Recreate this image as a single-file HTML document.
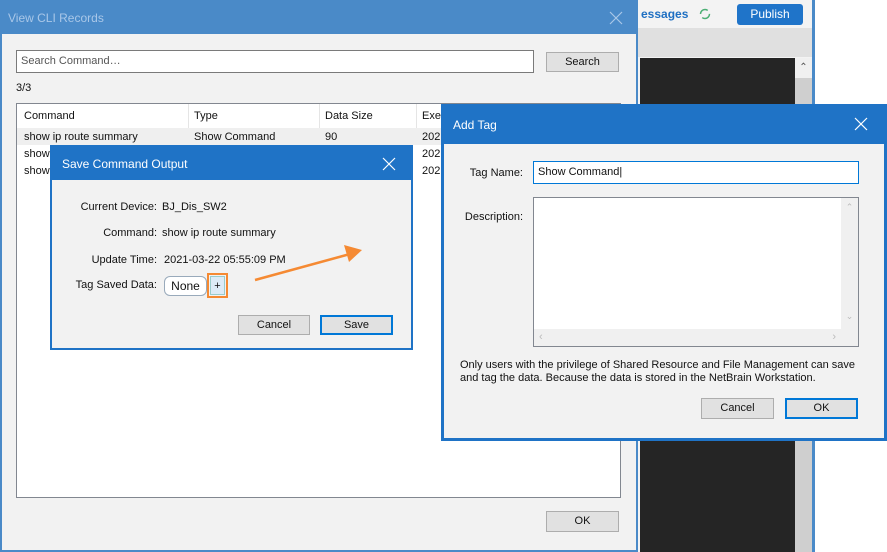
<!DOCTYPE html>
<html><head><style>
*{box-sizing:border-box;margin:0;padding:0}
body{width:887px;height:552px;position:relative;overflow:hidden;background:#fff;font-family:"Liberation Sans",sans-serif;font-size:11px;color:#111}
.a{position:absolute}
.btn{position:absolute;background:#e1e1e1;border:1px solid #adadad;text-align:center;font-size:11px;line-height:19px}
.btnp{border:2px solid #0078d7;line-height:17px}
.x{position:absolute;width:14px;height:14px}
</style></head><body>
<div class="a" style="left:637px;top:0;width:178px;height:552px;background:#f3f3f3"></div>
<div class="a" style="left:641px;top:7px;font-size:12px;color:#1e6fc2;font-weight:bold">essages</div>
<svg class="a" style="left:698px;top:7px" width="14" height="14"><circle cx="7" cy="7" r="4.5" fill="none" stroke="#4caf74" stroke-width="1.5" stroke-dasharray="10 4"/></svg>
<div class="a" style="left:737px;top:4px;width:66px;height:21px;background:#1f74c9;border-radius:3px;color:#fff;font-size:12px;text-align:center;line-height:21px">Publish</div>
<div class="a" style="left:637px;top:28px;width:175px;height:29px;background:#e0e0e0"></div>
<div class="a" style="left:640px;top:58px;width:155px;height:494px;background:#252525"></div>
<div class="a" style="left:795px;top:58px;width:17px;height:494px;background:#cfcfcf"></div>
<div class="a" style="left:795px;top:58px;width:17px;height:20px;background:#f0f0f0;text-align:center;font-size:10px;color:#555;line-height:20px">&#8963;</div>
<div class="a" style="left:812px;top:0;width:3px;height:552px;background:#4a8ac8"></div>

<div class="a" style="left:0;top:0;width:638px;height:552px;background:#f2f2f2;border:2px solid #4a8ac8;border-top:none"></div>
<div class="a" style="left:0;top:0;width:638px;height:34px;background:#4a8ac8"></div>
<div class="a" style="left:8px;top:11px;font-size:12px;color:#a9c7e8">View CLI Records</div>
<svg class="x" style="left:609px;top:11px"><path d="M1 1L13 13M13 1L1 13" stroke="#a9c7e8" stroke-width="1.2"/></svg>
<div class="a" style="left:16px;top:50px;width:518px;height:23px;background:#fff;border:1px solid #7a7a7a;padding:4px 4px;color:#555">Search Command…</div>
<div class="btn" style="left:546px;top:52px;width:73px;height:20px">Search</div>
<div class="a" style="left:16px;top:82px">3/3</div>
<div class="a" style="left:16px;top:103px;width:605px;height:395px;background:#fff;border:1px solid #828790"></div>
<div class="a" style="left:188px;top:104px;width:1px;height:24px;background:#e5e5e5"></div>
<div class="a" style="left:319px;top:104px;width:1px;height:24px;background:#e5e5e5"></div>
<div class="a" style="left:416px;top:104px;width:1px;height:24px;background:#e5e5e5"></div>
<div class="a" style="left:24px;top:110px">Command</div>
<div class="a" style="left:194px;top:110px">Type</div>
<div class="a" style="left:325px;top:110px">Data Size</div>
<div class="a" style="left:422px;top:110px">Exe</div>
<div class="a" style="left:17px;top:128px;width:430px;height:17px;background:#efefef"></div>
<div class="a" style="left:24px;top:131px">show ip route summary</div>
<div class="a" style="left:194px;top:131px">Show Command</div>
<div class="a" style="left:325px;top:131px">90</div>
<div class="a" style="left:422px;top:131px">202</div>
<div class="a" style="left:24px;top:148px">show</div><div class="a" style="left:422px;top:148px">202</div>
<div class="a" style="left:24px;top:165px">show</div><div class="a" style="left:422px;top:165px">202</div>
<div class="btn" style="left:546px;top:511px;width:73px;height:21px">OK</div>

<div class="a" style="left:50px;top:145px;width:363px;height:205px;background:#f2f2f2;border:2px solid #1f73c6"></div>
<div class="a" style="left:50px;top:145px;width:363px;height:35px;background:#1f73c6;border-radius:4px 4px 0 0"></div>
<div class="a" style="left:62px;top:157px;font-size:12px;color:#fff">Save Command Output</div>
<svg class="x" style="left:382px;top:157px"><path d="M1 1L13 13M13 1L1 13" stroke="#fff" stroke-width="1.2"/></svg>
<div class="a" style="left:40px;top:201px;width:117px;text-align:right">Current Device:</div><div class="a" style="left:162px;top:201px">BJ_Dis_SW2</div>
<div class="a" style="left:40px;top:227px;width:117px;text-align:right">Command:</div><div class="a" style="left:162px;top:227px">show ip route summary</div>
<div class="a" style="left:40px;top:254px;width:117px;text-align:right">Update Time:</div><div class="a" style="left:164px;top:254px">2021-03-22 05:55:09 PM</div>
<div class="a" style="left:40px;top:279px;width:117px;text-align:right">Tag Saved Data:</div>
<div class="a" style="left:164px;top:276px;width:43px;height:20px;background:#fff;border:1px solid #9ab;border-radius:6px;text-align:center;line-height:18px;font-size:12px">None</div>
<div class="a" style="left:207px;top:273px;width:21px;height:25px;border:2px solid #f58a33"></div>
<div class="a" style="left:210px;top:276px;width:15px;height:19px;background:#dcebf7;border:1px solid #9cc;text-align:center;line-height:19px;font-size:11px">+</div>
<div class="btn" style="left:238px;top:315px;width:72px;height:20px">Cancel</div>
<div class="btn btnp" style="left:320px;top:315px;width:73px;height:20px">Save</div>
<svg class="a" style="left:250px;top:240px" width="120" height="50"><path d="M5 40L100 14" stroke="#f58a33" stroke-width="2.5"/><path d="M112 10L94 5L99 22Z" fill="#f58a33"/></svg>

<div class="a" style="left:441px;top:104px;width:446px;height:337px;background:#f2f2f2;border:3px solid #1f73c6"></div>
<div class="a" style="left:441px;top:104px;width:446px;height:40px;background:#1f73c6;border-radius:4px 4px 0 0"></div>
<div class="a" style="left:453px;top:118px;font-size:12px;color:#fff">Add Tag</div>
<svg class="x" style="left:854px;top:117px"><path d="M1 1L13 13M13 1L1 13" stroke="#fff" stroke-width="1.2"/></svg>
<div class="a" style="left:450px;top:167px;width:73px;text-align:right">Tag Name:</div>
<div class="a" style="left:533px;top:161px;width:326px;height:23px;background:#fff;border:1px solid #0078d7;padding:4px 4px">Show Command|</div>
<div class="a" style="left:450px;top:211px;width:73px;text-align:right">Description:</div>
<div class="a" style="left:533px;top:197px;width:326px;height:150px;background:#fff;border:1px solid #828790"></div>
<div class="a" style="left:841px;top:198px;width:17px;height:131px;background:#f0f0f0;color:#bbb;font-size:9px;text-align:center"><div style="margin-top:4px">&#8963;</div><div style="margin-top:98px">&#8964;</div></div>
<div class="a" style="left:534px;top:329px;width:324px;height:17px;background:#f0f0f0;color:#bbb;font-size:11px;line-height:17px"><span style="margin-left:5px">&lsaquo;</span><span style="position:absolute;right:22px">&rsaquo;</span></div>
<div class="a" style="left:460px;top:359px;line-height:13px;width:420px">Only users with the privilege of Shared Resource and File Management can save<br>and tag the data. Because the data is stored in the NetBrain Workstation.</div>
<div class="btn" style="left:701px;top:398px;width:73px;height:21px">Cancel</div>
<div class="btn btnp" style="left:785px;top:398px;width:73px;height:21px">OK</div>
</body></html>
